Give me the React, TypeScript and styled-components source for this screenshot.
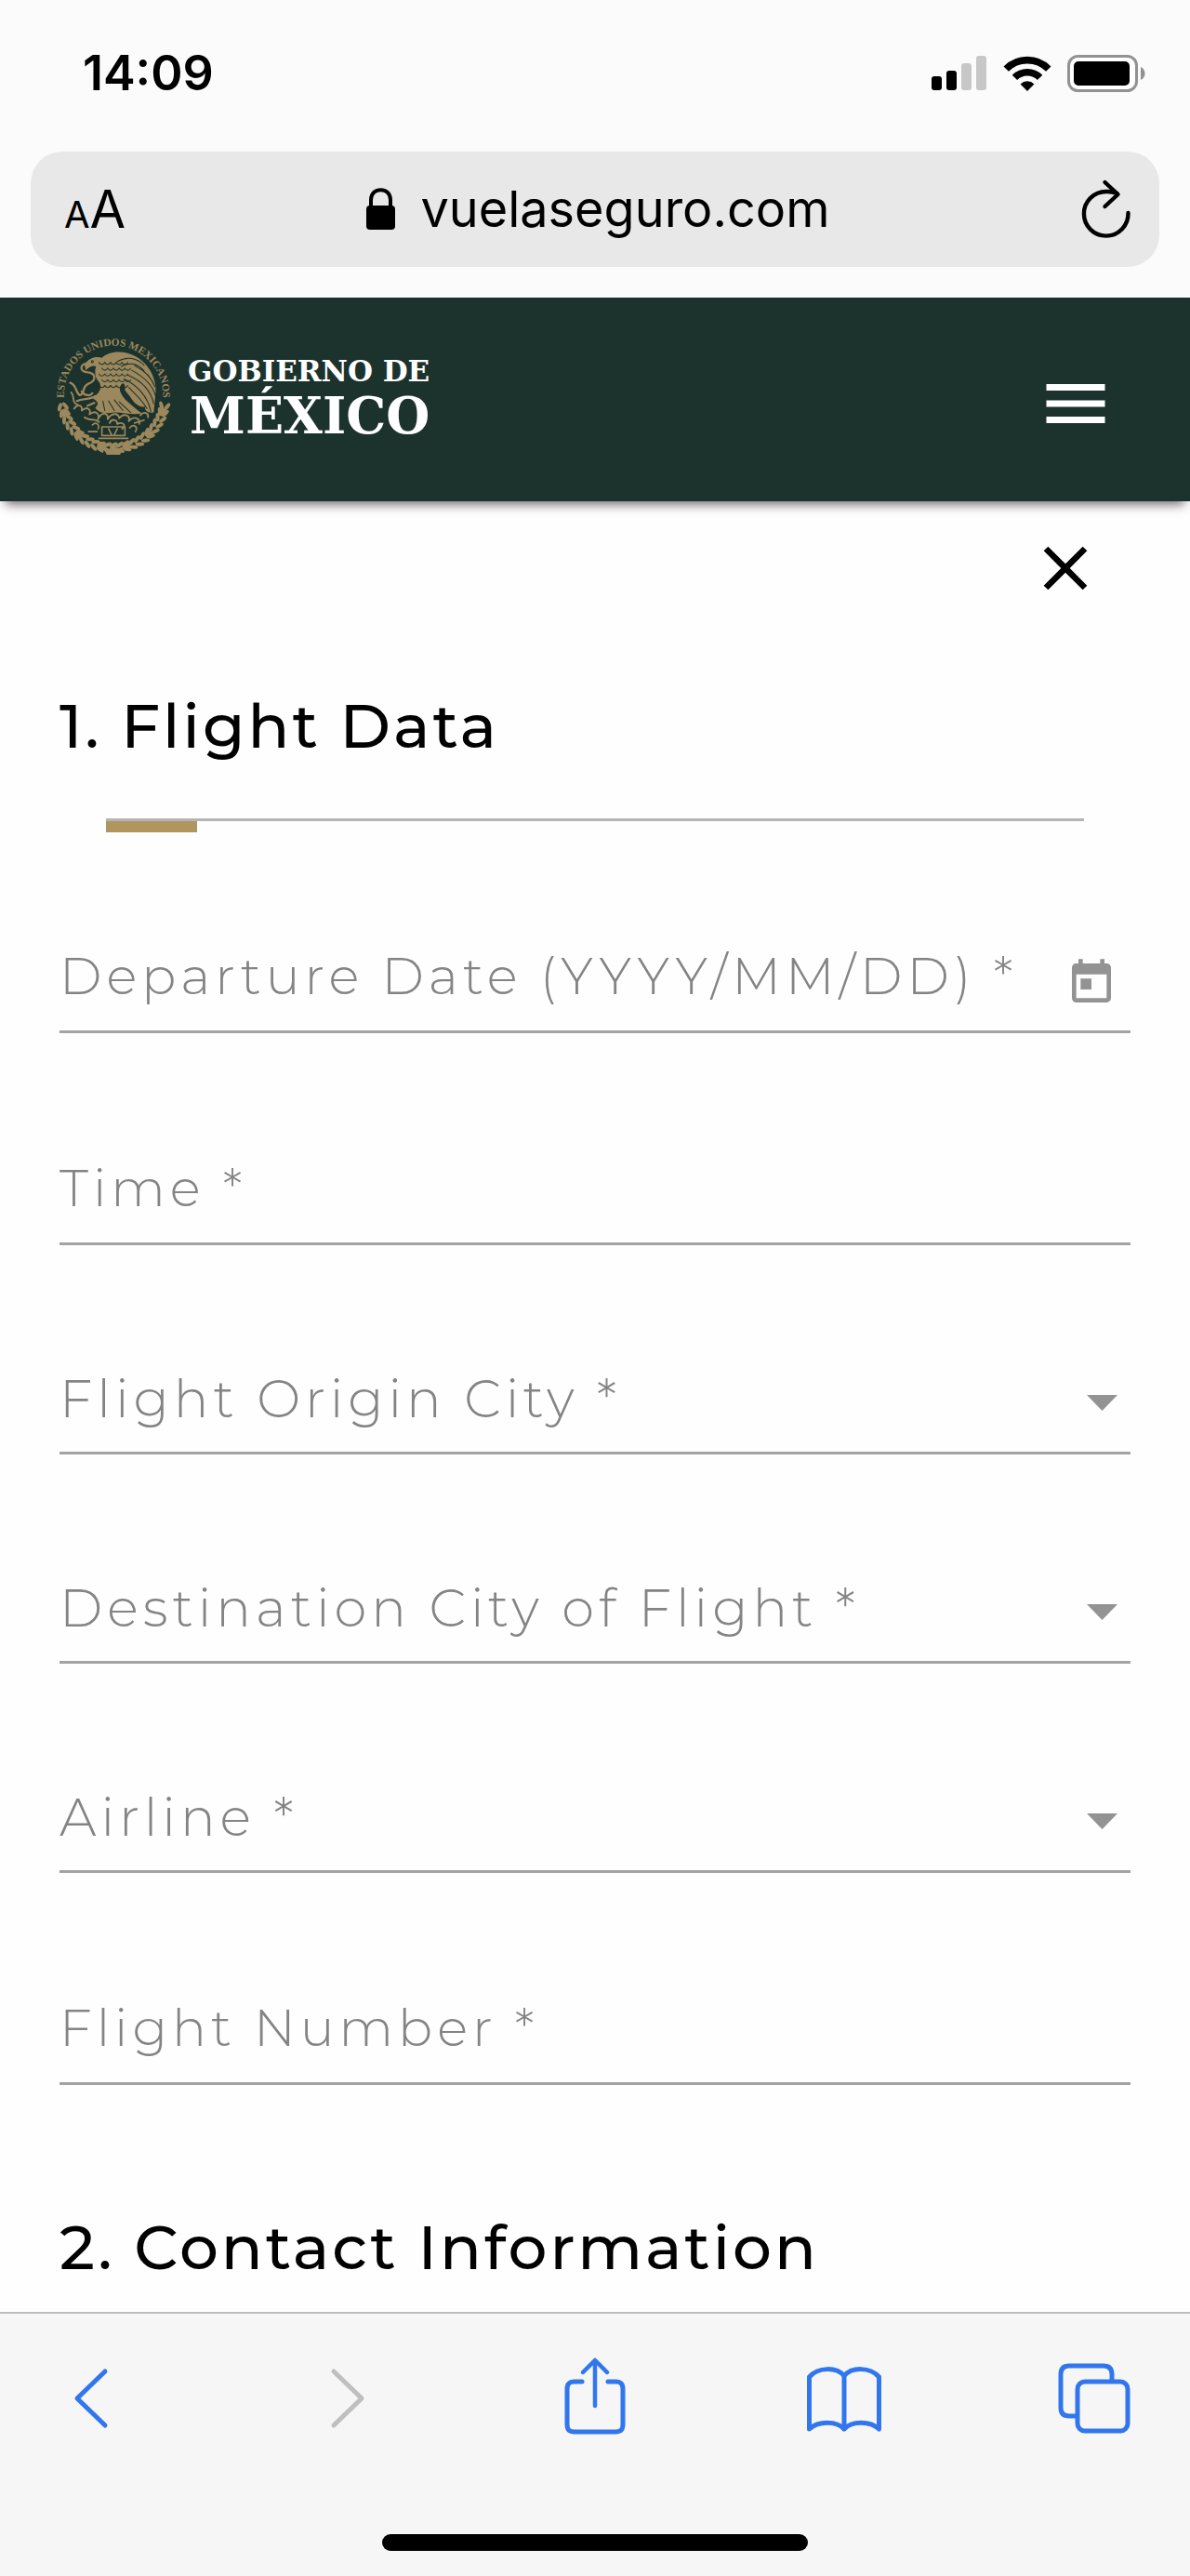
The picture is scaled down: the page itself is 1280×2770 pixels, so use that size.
import React from "react";
import styled, { createGlobalStyle } from "styled-components";
import { MdToday, MdClose, MdMenu } from "react-icons/md";

const color = {
  green: "#1c332d",
  gold: "#b0965d",
  seal: "#9c885c",
  label: "#848484",
  icon: "#939393",
  rule: "#a3a3a3",
  blue: "#3176ee",
  disabled: "#bfbfbf",
};

const sans = `Montserrat, Inter, "Liberation Sans", sans-serif`;
const system = `Inter, "Liberation Sans", sans-serif`;

const GlobalStyle = createGlobalStyle`
  *, *::before, *::after { box-sizing: border-box; }
  body { margin: 0; background: #fefefe; color: #000; font-family: ${sans}; }
  button { padding: 0; border: 0; background: none; color: inherit; font: inherit; cursor: pointer; }
  svg { display: block; }
`;

const Screen = styled.div`
  display: flex;
  flex-direction: column;
  min-height: 100vh;
`;

/* Browser chrome, top */

const TopChrome = styled.div`
  padding-bottom: 33px;
  background: #fbfbfb;
  font-family: ${system};
`;

const StatusBar = styled.div`
  display: flex;
  align-items: center;
  justify-content: space-between;
  padding: 48px 48px 0 89px;
`;

const Clock = styled.time`
  font-size: 52px;
  font-weight: 600;
  line-height: 62px;
`;

const StatusIcons = styled.div`
  display: flex;
  align-items: center;
  gap: 17px;
`;

const AddressBar = styled.div`
  display: flex;
  align-items: center;
  justify-content: space-between;
  height: 124px;
  margin: 53px 33px 0;
  padding: 0 30px 0 36px;
  border-radius: 34px;
  background: #e8e8e8;
`;

const TextSizeButton = styled.button`
  display: flex;
  align-items: baseline;
  width: 66px;
  font-size: 40px;
  line-height: 1;

  && span {
    font-size: 56px;
  }
`;

const Address = styled.div`
  display: flex;
  align-items: center;
  gap: 26px;
  padding-right: 12px;
  font-size: 54px;
  line-height: 64px;
`;

/* Site */

const SiteHeader = styled.header`
  display: flex;
  align-items: center;
  justify-content: space-between;
  height: 219px;
  padding: 0 81px 0 58px;
  background: ${color.green};
  box-shadow: 0 9px 11px -6px rgba(50, 30, 40, 0.7);
  color: #fff;
`;

const Brand = styled.a`
  display: flex;
  align-items: center;
  gap: 16px;
  padding-bottom: 8px;
  color: inherit;
  font-family: "DejaVu Serif", "Liberation Serif", serif;
  font-weight: 700;
  text-decoration: none;
`;

const BrandName = styled.span`
  display: flex;
  flex-direction: column;
  align-items: flex-end;
  padding-top: 8px;
`;

const BrandTop = styled.span`
  font-size: 31px;
  line-height: 34px;
`;

const BrandMain = styled.span`
  font-size: 54px;
  line-height: 62px;
`;

const MenuButton = styled.button`
  padding-top: 8px;
`;

const Main = styled.main`
  flex: 1;
  padding: 32px 64px 29px;
`;

const CloseRow = styled.div`
  display: flex;
  justify-content: flex-end;
  padding-right: 30px;
`;

const Heading = styled.h2`
  margin: 90px 0 0;
  font-size: 66px;
  font-weight: 500;
  letter-spacing: 3px;
  line-height: 80px;
`;

const Divider = styled.div`
  height: 15px;
  margin: 59px 50px 0;
  border-top: 3px solid #b5b5b5;

  &::before {
    content: "";
    display: block;
    width: 98px;
    height: 12px;
    background: ${color.gold};
  }
`;

const Form = styled.form`
  display: flex;
  flex-direction: column;
  padding: 96px 0 45px;
  gap: 108px;
`;

const Field = styled.div<{ $compact?: boolean }>`
  display: grid;
  grid-template-columns: 1fr auto;
  align-items: center;
  height: ${(p) => (p.$compact ? 117 : 120)}px;
  padding-right: 14px;
  border-bottom: 3px solid ${color.rule};
  color: ${color.icon};
  font-size: ${(p) => (p.$compact ? 56 : 55)}px;
  font-weight: 300;
  line-height: 64px;

  & > svg {
    grid-area: 1 / 2;
    margin-top: 8px;
  }
`;

const Label = styled.label`
  grid-area: 1 / 1;
  z-index: 1;
  color: ${color.label};
  letter-spacing: 5px;
  white-space: nowrap;
  pointer-events: none;
`;

const Input = styled.input`
  grid-area: 1 / 1;
  align-self: stretch;
  width: 100%;
  min-width: 0;
  padding: 0;
  border: 0;
  outline: 0;
  background: transparent;
  font: inherit;
`;

const Select = styled.select`
  grid-area: 1 / 1 / 2 / 3;
  align-self: stretch;
  width: 100%;
  padding: 0;
  border: 0;
  outline: 0;
  appearance: none;
  background: transparent;
  font: inherit;
`;

const DateButton = styled.button`
  grid-area: 1 / 2;
  padding-top: 14px;
`;

/* Browser chrome, bottom */

const BottomChrome = styled.footer`
  display: flex;
  flex-direction: column;
  align-items: center;
  gap: 95px;
  padding: 42px 0 27px;
  border-top: 2px solid #bdbdbd;
  background: #f6f6f6;
`;

const Toolbar = styled.nav`
  display: flex;
  justify-content: space-between;
  align-self: stretch;
  padding: 0 52px 0 48px;
`;

const ToolButton = styled.button`
  color: ${color.blue};

  &:disabled {
    color: ${color.disabled};
  }
`;

const HomeIndicator = styled.div`
  width: 458px;
  max-width: 60%;
  height: 18px;
  border-radius: 9px;
  background: #000;
`;

const Signal = () => (
  <svg width="60" height="38" viewBox="0 0 60 38" aria-hidden="true">
    <rect x="0" y="22" width="11" height="15" rx="3" />
    <rect x="16" y="16" width="11" height="21" rx="3" />
    <rect x="32" y="8" width="11" height="29" rx="3" fill="#c7c7c7" />
    <rect x="48" y="0" width="11" height="37" rx="3" fill="#c7c7c7" />
  </svg>
);

const Wifi = () => (
  <svg width="52" height="38" viewBox="0 0 52 38" aria-hidden="true">
    <g fill="none" stroke="#000" strokeWidth="7.6">
      <path d="M3.2 14.2 A32 32 0 0 1 48.8 14.2" />
      <path d="M12.4 23.4 A19.2 19.2 0 0 1 39.6 23.4" />
    </g>
    <path d="M26 38 L18.6 30.4 A10.5 10.5 0 0 1 33.4 30.4 Z" />
  </svg>
);

const Battery = () => (
  <svg width="84" height="40" viewBox="0 0 84 40" aria-hidden="true">
    <rect x="1.5" y="1.5" width="73" height="37" rx="10" fill="#fff" stroke="#929292" strokeWidth="3" />
    <rect x="7" y="7" width="60" height="26" rx="5" />
    <path d="M79 13 C85 16 85 24 79 27 Z" fill="#929292" />
  </svg>
);

const Lock = () => (
  <svg width="33" height="46" viewBox="0 0 33 46" aria-hidden="true">
    <rect x="1" y="19" width="31" height="26" rx="4" />
    <path d="M6 22 V13 C6 -1.500 27 -1.500 27 13 V22" fill="none" stroke="#000" strokeWidth="4" />
  </svg>
);

const Reload = () => (
  <svg width="54" height="66" viewBox="0 0 54 66" fill="none" stroke="#000" strokeWidth="4.4" strokeLinecap="round" strokeLinejoin="round" aria-hidden="true">
    <path d="M38.500 16 C34.500 14.500 30.500 13.800 27 14 A23.800 23.800 0 1 0 50.500 37" />
    <path d="M25.500 4 L39.500 17 L25.500 30" />
  </svg>
);

const wreath = Array.from({ length: 25 }, (_, i) => 4 + i * 7.15);
const scales = [0, 1, 2, 3, 4].flatMap((r) =>
  [0, 1, 2, 3, 4].map((c) => ({ x: 47 + c * 6 + (r % 2) * 3, y: 27 + r * 6 })),
);

const Seal = () => (
  <svg width="128" height="128" viewBox="0 0 124 124" fill="none" stroke={color.seal} strokeLinecap="round" strokeLinejoin="round" aria-hidden="true">
    <defs>
      <path id="seal-arc" d="M11.500 71 A51.500 51.500 0 1 1 112.500 71" />
    </defs>
    <text fill={color.seal} stroke="none" fontFamily="Liberation Serif, serif" fontSize="11" fontWeight="700">
      <textPath href="#seal-arc" startOffset="50%" textAnchor="middle">
        ESTADOS UNIDOS MEXICANOS
      </textPath>
    </text>
    <g fill={color.seal} stroke="none">
      {wreath.slice(1, 24).map((a, i) => (
        <g key={a} transform={`rotate(${a} 62 62)`}>
          <ellipse cx="119" cy="62" rx="2" ry="4.600" transform="rotate(28 119 62)" />
          <ellipse cx="113" cy="62" rx="2" ry="4.600" transform="rotate(-28 113 62)" />
          {i % 4 === 1 && <ellipse cx="116" cy="62" rx="5" ry="4" />}
        </g>
      ))}
      <path d="M51 114 L58 117 L62 111 L66 117 L73 114 L69 123 L55 123 Z" />
      <path d="M32 29 C36 22 44 20 50 22 C58 14 74 14 86 21 C98 28 107 42 106 58 L104 79 C98 80 94 77 95 73 C89 74 84 70 79 62 L74 56 C75 49 72 46 69 52 C67 60 76 68 92 80 C80 82 70 78 62 79 C54 81 46 79 43 74 C48 70 45 67 40 64 C47 59 51 54 47 47 C43 44 42 36 44 31 C39 29 36 33 33 35 Z" />
    </g>
    <g stroke={color.green} strokeWidth="1">
      {scales.map((s) => (
        <path key={`${s.x}-${s.y}`} d={`M${s.x} ${s.y} q3 4 6 0`} />
      ))}
      <path d="M73 44 C86 50 98 62 101 78 M77 40 C91 46 101 56 104 70 M81 35 C94 42 103 50 106 62 M84 30 C94 35 102 43 105 52 M78 53 C84 59 92 66 97 75 M66 26 C76 20 87 22 94 30 M70 31 C79 26 88 28 94 36" />
      <path d="M57 67 L63 77 M63 66 L72 77 M68 68 L80 79 M51 67 L53 77" />
      <circle cx="40" cy="26" r="1" />
    </g>
    <g strokeWidth="2.200">
      <path d="M36 28 C27 28 26 36 34 37 C45 38 44 46 36 49 C28 53 33 60 27 61 C22 58 24 50 17 48" />
      <path d="M43 62 C37 66 30 64 24 67 M42 69 L35 72 M29 57 C32 62 38 62 40 59" />
      <path d="M18 58 C22 62 18 69 25 71 M21 75 c4 -6 9 -3 8 2 c6 -5 10 -1 8 4 c6 -5 11 -1 9 5" strokeWidth="1.800" />
      <path d="M47 84 c4 -6 10 -4 9 2 c4 -7 11 -7 12 -1 c5 -6 12 -3 10 3 c5 -6 12 -3 11 3 M90 82 c4 -5 9 -2 8 2 M32 84 c5 4 12 1 15 5 M58 90 c2 -5 8 -4 8 1 c6 -3 10 2 5 5" strokeWidth="1.800" />
      <path d="M40 92 c4 -4 8 0 6 4 M36 99 h9 M79 95 c4 -5 9 -1 6 4 M84 90 l10 -3 M50 94 h24 M50 94 v9 h24 v-9 M47 106 h30 M57 96 l3 6 M66 96 l-3 6" strokeWidth="1.600" />
    </g>
  </svg>
);

const Caret = () => (
  <svg width="33" height="17" viewBox="0 0 33 17" aria-hidden="true">
    <path d="M0 0 H33 L16.500 17 Z" fill="currentColor" />
  </svg>
);

const ToolIcon = ({ children }: { children: React.ReactNode }) => (
  <svg width="100" height="100" viewBox="0 0 100 100" fill="none" stroke="currentColor" strokeWidth="5" strokeLinecap="round" strokeLinejoin="round" aria-hidden="true">
    {children}
  </svg>
);

const SelectField = ({ id, label }: { id: string; label: string }) => (
  <Field $compact>
    <Label htmlFor={id}>{label}</Label>
    <Select id={id} required defaultValue="">
      <option value="" />
    </Select>
    <Caret />
  </Field>
);

export default function App() {
  return (
    <Screen>
      <GlobalStyle />
      <TopChrome>
        <StatusBar>
          <Clock>14:09</Clock>
          <StatusIcons>
            <Signal />
            <Wifi />
            <Battery />
          </StatusIcons>
        </StatusBar>
        <AddressBar>
          <TextSizeButton aria-label="Text size">
            A<span>A</span>
          </TextSizeButton>
          <Address>
            <Lock />
            vuelaseguro.com
          </Address>
          <button aria-label="Reload">
            <Reload />
          </button>
        </AddressBar>
      </TopChrome>

      <SiteHeader>
        <Brand href="#">
          <Seal />
          <BrandName>
            <BrandTop>GOBIERNO DE</BrandTop>
            <BrandMain>MÉXICO</BrandMain>
          </BrandName>
        </Brand>
        <MenuButton aria-label="Menu">
          <MdMenu size={84} />
        </MenuButton>
      </SiteHeader>

      <Main>
        <CloseRow>
          <button aria-label="Close">
            <MdClose size={80} />
          </button>
        </CloseRow>
        <Heading>1. Flight Data</Heading>
        <Divider />
        <Form>
          <Field>
            <Label htmlFor="date">Departure Date (YYYY/MM/DD) *</Label>
            <Input id="date" required />
            <DateButton type="button" aria-label="Choose date">
              <MdToday size={56} />
            </DateButton>
          </Field>
          <Field>
            <Label htmlFor="time">Time *</Label>
            <Input id="time" required />
          </Field>
          <SelectField id="origin" label="Flight Origin City *" />
          <SelectField id="destination" label="Destination City of Flight *" />
          <SelectField id="airline" label="Airline *" />
          <Field>
            <Label htmlFor="number">Flight Number *</Label>
            <Input id="number" required />
          </Field>
        </Form>
        <Heading>2. Contact Information</Heading>
      </Main>

      <BottomChrome>
        <Toolbar aria-label="Browser">
          <ToolButton aria-label="Back">
            <ToolIcon>
              <path d="M65 20 L35 49 L65 78" />
            </ToolIcon>
          </ToolButton>
          <ToolButton aria-label="Forward" disabled>
            <ToolIcon>
              <path d="M41 20 L71 49 L41 78" />
            </ToolIcon>
          </ToolButton>
          <ToolButton aria-label="Share">
            <ToolIcon>
              <path d="M38 31 H30 C24 31 22 34 22 39 V77 C22 82 24 85 30 85 H74 C80 85 82 82 82 77 V39 C82 34 80 31 74 31 H66" />
              <path d="M52 57 V9 M39 21 L52 8 L65 21" strokeWidth="4.500" />
            </ToolIcon>
          </ToolButton>
          <ToolButton aria-label="Bookmarks">
            <ToolIcon>
              <path d="M50 25 C42 15 22 15 12.500 26 V82 C22 73 42 73 50 82 C58 73 78 73 87.500 82 V26 C78 15 58 15 50 25 V82" />
            </ToolIcon>
          </ToolButton>
          <ToolButton aria-label="Tabs">
            <ToolIcon>
              <path d="M30 68 H22 C16 68 13 65 13 59 V23 C13 17 16 14 22 14 H59 C65 14 68 17 68 23 V30" />
              <rect x="31" y="31" width="54" height="53" rx="8" />
            </ToolIcon>
          </ToolButton>
        </Toolbar>
        <HomeIndicator />
      </BottomChrome>
    </Screen>
  );
}
